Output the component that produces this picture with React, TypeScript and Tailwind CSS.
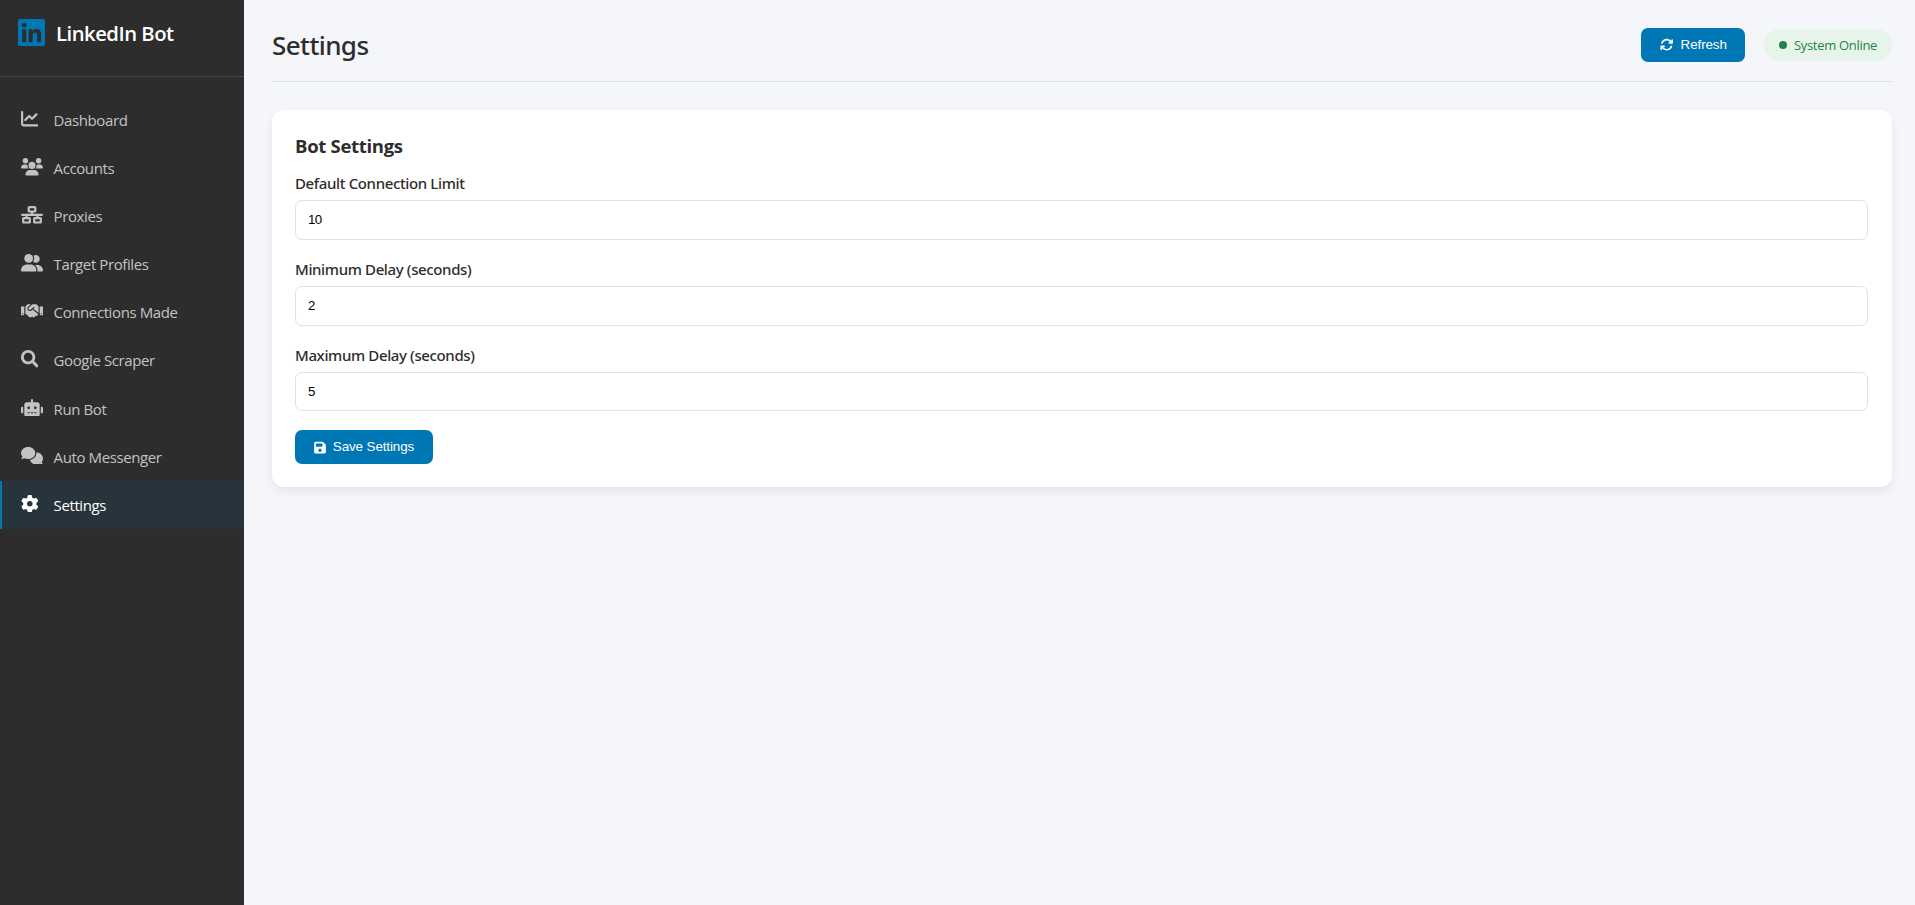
import { useState } from "react";
import type { ComponentType } from "react";
import { FaHandshake, FaRobot, FaSearch } from "react-icons/fa";
import { FaArrowsRotate, FaChartLine, FaFloppyDisk, FaGear, FaLinkedin, FaNetworkWired } from "react-icons/fa6";

interface IconProps {
  className?: string;
}

interface NavEntry {
  label: string;
  icon: ComponentType<IconProps>;
  wide?: boolean;
}

function UsersIcon({ className }: IconProps) {
  return (
    <svg viewBox="0 0 640 512" fill="currentColor" className={className}>
      <circle cx="512" cy="80" r="80" />
      <circle cx="128" cy="80" r="80" />
      <circle cx="319.9" cy="216" r="104" />
      <path d="M183.9 216c0-5.45.98-10.63 1.6-15.91C174.6 194.1 162.6 192 149.9 192H88.08C39.44 192 0 233.8 0 285.3 0 295.6 7.89 304 17.62 304h199.5C196.7 280.2 183.9 249.7 183.9 216z" />
      <path d="M551.9 192h-61.84c-12.8 0-24.88 3.04-35.86 8.24.6 5.26 1.6 10.36 1.6 15.76 0 33.71-12.78 64.21-33.16 88h199.7c9.76 0 17.66-8.4 17.66-18.7C640 233.8 600.6 192 551.9 192z" />
      <path d="M369.9 352h-99.8C191.6 352 128 411.7 128 485.3c0 14.8 12.7 26.7 28.4 26.7h327.2c15.7 0 28.4-11.9 28.4-26.7C512 411.7 448.4 352 369.9 352z" />
    </svg>
  );
}

function UserGroupIcon({ className }: IconProps) {
  return (
    <svg viewBox="0 0 640 512" fill="currentColor" className={className}>
      <circle cx="224" cy="128" r="128" />
      <path d="M274.7 304H173.3C77.61 304 0 381.6 0 477.3 0 496.5 15.52 512 34.66 512h378.7c19.14 0 34.64-15.5 34.64-34.7C448 381.6 370.4 304 274.7 304z" />
      <path d="M479.1 320h-73.85C451.2 357.7 480 414.1 480 477.3c0 12.8-3.8 24.7-10 34.7h138c17.7 0 32-14.4 32-32.1C640 391.6 568.4 320 479.1 320z" />
      <path d="M432 256c61.9 0 112-50.1 112-112S493.9 32 432 32c-25.11 0-48.04 8.56-66.72 22.51C376.8 76.63 384 101.4 384 128c0 35.52-11.93 68.14-31.59 94.71C372.7 243.2 400.8 256 432 256z" />
    </svg>
  );
}

function CommentsIcon({ className }: IconProps) {
  return (
    <svg viewBox="0 0 640 512" fill="currentColor" className={className}>
      <path d="M416 176C416 78.8 322.9 0 208 0S0 78.8 0 176c0 39.57 15.62 75.96 41.67 105.4-16.39 32.76-39.23 57.32-39.59 57.68-2.1 2.2-2.67 5.47-1.44 8.35C1.9 350.3 4.6 352 7.66 352c38.35 0 70.76-11.12 95.74-24.04C134.2 343.1 169.8 352 208 352c114.9 0 208-78.8 208-176z" />
      <path d="M599.6 443.7C624.8 413.9 640 376.6 640 336c0-97.2-86-176-192-176h-.93c.43 5.3.93 10.6.93 16 0 98.62-79.68 181.2-186.1 202.5C282.7 455.1 357.1 512 448 512c33.69 0 65.32-8 92.85-21.98C565.2 502 596.1 512 632.3 512c3.06 0 5.76-1.73 7.02-4.6 1.23-2.88.66-6.15-1.44-8.36-.28-.34-21.98-23.74-38.28-55.34z" />
    </svg>
  );
}

const NAV: NavEntry[] = [
  { label: "Dashboard", icon: FaChartLine },
  { label: "Accounts", icon: UsersIcon, wide: true },
  { label: "Proxies", icon: FaNetworkWired, wide: true },
  { label: "Target Profiles", icon: UserGroupIcon, wide: true },
  { label: "Connections Made", icon: FaHandshake, wide: true },
  { label: "Google Scraper", icon: FaSearch },
  { label: "Run Bot", icon: FaRobot, wide: true },
  { label: "Auto Messenger", icon: CommentsIcon, wide: true },
  { label: "Settings", icon: FaGear },
];

function Sidebar() {
  const [active, setActive] = useState("Settings");

  return (
    <aside className="w-[244px] shrink-0 bg-[#2d2d2d]">
      <div className="flex h-[77px] items-start border-b border-[#464646] pt-[17px] pl-[18px]">
        <FaLinkedin className="h-[31px] w-[27px] text-[#0077b5]" />
        <span className="ml-[11px] text-[20.3px] leading-[33px] font-semibold tracking-[-0.5px] text-white">LinkedIn Bot</span>
      </div>
      <nav className="pt-[19.2px]">
        {NAV.map(({ label, icon: Icon, wide }) => (
          <a
            key={label}
            onClick={() => setActive(label)}
            className={`flex h-[48.1px] cursor-pointer items-center border-l-2 pl-[18.6px] ${
              active === label ? "border-[#0077b5] bg-[#27343b] text-white" : "border-transparent text-[#c3c3c3]"
            }`}
          >
            <span className="mb-[3px] w-[33px]">
              <Icon className={wide ? "block h-[17.6px] w-[22px]" : "block h-[17.6px] w-[17.6px]"} />
            </span>
            <span className="text-[15px] tracking-[-0.4px]">{label}</span>
          </a>
        ))}
      </nav>
    </aside>
  );
}

function Field({ label, value }: { label: string; value: string }) {
  const [current, setCurrent] = useState(value);
  return (
    <div className="mb-[19px]">
      <label className="mb-[7px] block font-['Noto_Sans',sans-serif] text-[15px] leading-5 font-medium tracking-[-0.37px]">{label}</label>
      <input
        value={current}
        onChange={(e) => setCurrent(e.target.value)}
        className="block h-[39.8px] w-full rounded-[7px] border border-[#dfe1e4] bg-white px-[12px] font-['Liberation_Sans',sans-serif] text-[13.3px] tracking-[-0.6px] text-black"
      />
    </div>
  );
}

export default function App() {
  return (
    <div className="flex h-[905px] bg-[#f4f6fa] font-['Open_Sans','Noto_Sans',sans-serif] text-[#2d2d2d]">
      <Sidebar />
      <main className="flex-1 pt-7 pr-[23px] pl-7">
        <header className="flex h-[54px] items-start justify-between border-b border-[#dcdfe4]">
          <h1 className="font-['Noto_Sans',sans-serif] text-[26px] leading-[35px] font-medium tracking-[-0.6px]">Settings</h1>
          <div className="flex items-start">
            <button className="flex h-[34px] w-[104px] items-center justify-center rounded-[7px] bg-[#0077b5] pl-px font-['Liberation_Sans',sans-serif] text-[13.4px] font-medium tracking-[-0.1px] text-white">
              <FaArrowsRotate className="mr-[7px] h-[13.4px] w-[13.4px]" />
              Refresh
            </button>
            <span className="mt-px ml-[19px] flex h-8 w-[128px] items-center justify-center rounded-full bg-[#e6f4ea] text-[13px] tracking-[-0.3px] text-[#1e8449]">
              <span className="mr-[7px] h-2 w-2 rounded-full bg-[#25804f]" />
              <span className="pt-px">System Online</span>
            </span>
          </div>
        </header>

        <section className="mt-7 h-[377px] rounded-xl bg-white pt-[23px] pr-6 pl-[23px] shadow-[0_4px_10px_rgba(0,0,0,0.07)]">
          <h2 className="mb-[14px] text-[18.5px] leading-[26px] font-bold tracking-[-0.3px]">Bot Settings</h2>
          <Field label="Default Connection Limit" value="10" />
          <Field label="Minimum Delay (seconds)" value="2" />
          <Field label="Maximum Delay (seconds)" value="5" />
          <button className="flex h-[34px] w-[138px] items-center justify-center rounded-[7px] bg-[#0077b5] font-['Liberation_Sans',sans-serif] text-[13.4px] font-medium tracking-[-0.1px] text-white">
            <FaFloppyDisk className="mr-[7px] h-[13.4px] w-[12px]" />
            Save Settings
          </button>
        </section>
      </main>
    </div>
  );
}
